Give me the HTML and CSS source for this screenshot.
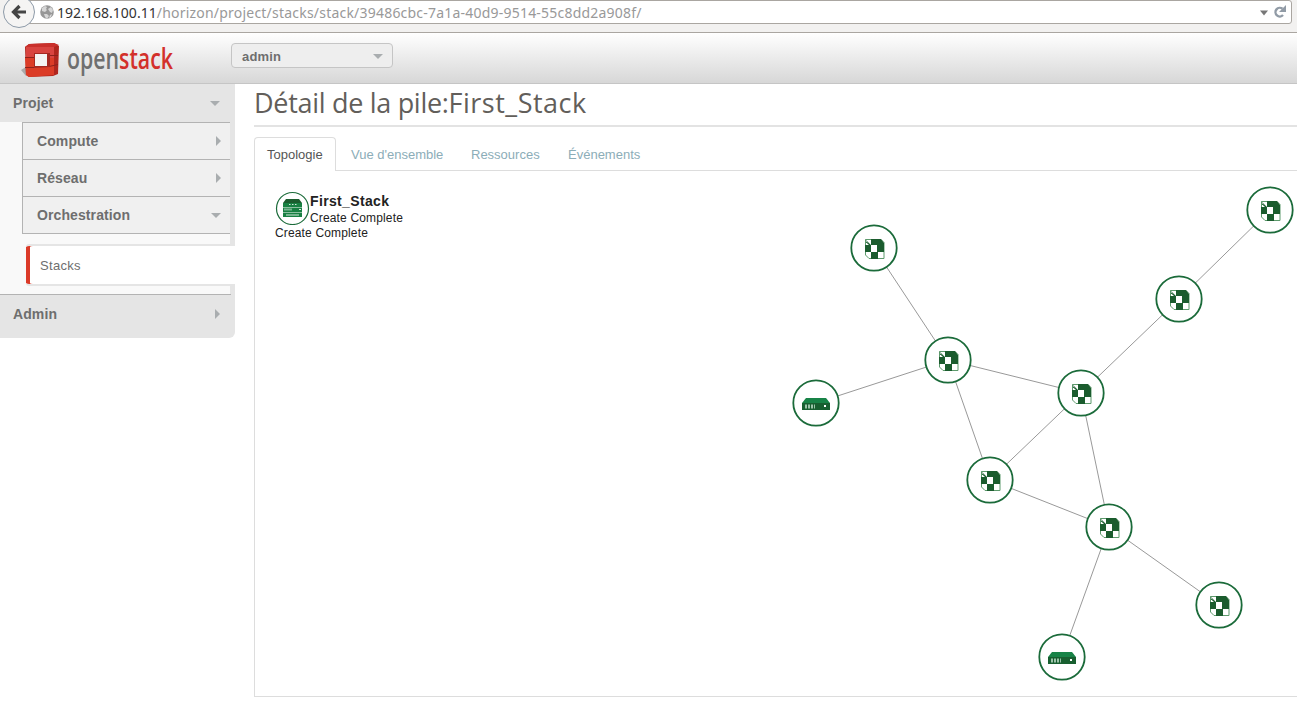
FILE: index.html
```html
<!DOCTYPE html>
<html lang="fr">
<head>
<meta charset="utf-8">
<title>Détail de la pile - OpenStack</title>
<link rel="stylesheet" href="styles.css">
</head>
<body>
<div class="browser">
  <div class="urlbar">
    <svg class="globe" width="14" height="14" viewBox="0 0 14 14"><circle cx="7" cy="7" r="6.8" fill="#969696"/><path d="M2 3l3-2 2 1-1 2 1 1-2 2-3-1zM8 4l3-2 2 3-1 3-2-1zM4 9l3 0 2 2-2 3-2-2zM10 10l2-1-1 3-2 1z" fill="#d6d6d6"/></svg>
    <span class="url"><span class="host">192.168.100.11</span><span class="path">/horizon/project/stacks/stack/39486cbc-7a1a-40d9-9514-55c8dd2a908f/</span></span>
    <svg class="tools" width="28" height="16" viewBox="0 0 28 16"><path d="M1 6.500h8l-4 5z" fill="#777"/><path d="M23.500 4.800A4.300 4.300 0 1 0 24 11" fill="none" stroke="#919ba6" stroke-width="2.400"/><path d="M27 1v7h-7l3-3z" fill="#919ba6"/></svg>
  </div>
  <svg class="back" width="36" height="29" viewBox="0 0 36 29"><circle cx="19" cy="12" r="15.500" fill="#f5f4f3" stroke="#8d9aa8"/><path d="M19.500 6L13.500 12l6 6M14 12h12" fill="none" stroke="#454545" stroke-width="3.200"/></svg>
</div>
<header class="topbar">
  <svg class="logo" width="160" height="44" viewBox="0 0 160 44">
    <path d="M1 31l5-3v9z" fill="#aaa"/>
    <path d="M5 8l4-3 25-1 5 3-1 28-5 2-24 1-3-2z" fill="#b0261e"/>
    <path d="M5 8l4-3 25-1 5 2-5 2z" fill="#c9302b"/>
    <path d="M6 8h28v11H6z" fill="#d84440"/>
    <path d="M5 19h29v17L9 38l-3-2z" fill="#db3c27"/>
    <path d="M5 18.500h9M5 28.500h9M29 16.500h9M29 27.500l9-2" stroke="#8d211b" fill="none"/>
    <path d="M14 14h16v14l-16 1z" fill="#a52822"/><path d="M15 15h12v12H15z" fill="#f4f4f4"/>
    <text x="47" y="30" textLength="106" lengthAdjust="spacingAndGlyphs"><tspan fill="#6f6f6f">open</tspan><tspan fill="#d3302b">stack</tspan></text>
  </svg>
  <div class="tenant">admin<i class="down"></i></div>
</header>
<div class="layout">
  <nav class="side">
    <div class="group">Projet<i class="down"></i></div>
    <div class="panel">
      <div class="items">
        <div class="item">Compute<i class="right"></i></div>
        <div class="item">Réseau<i class="right"></i></div>
        <div class="item">Orchestration<i class="down"></i></div>
      </div>
      <div class="leaf">Stacks</div>
    </div>
    <div class="group last">Admin<i class="right"></i></div>
  </nav>
  <main class="main">
    <h1><span class="label">Détail de la pile:</span><span class="name">First_Stack</span></h1>
    <div class="tabs"><div class="tab active">Topologie</div><div class="tab t2">Vue d'ensemble</div><div class="tab t3">Ressources</div><div class="tab t4">Événements</div></div>
    <div class="content">
      <svg class="graph" width="1042" height="525" viewBox="255 171 1042 525">
        <defs>
          <g id="ring"><circle r="22.700" fill="#fff" stroke="#1b6b3a" stroke-width="1.800"/></g>
          <g id="res"><use href="#ring"/><path d="M-8.500-8.500H7l3 3V10.500H-5l-3.500-3.500z" fill="#fff" stroke="#5d9a6c"/><path d="M-9-9L-3-3V-9H7l3 4V-2H3V4h7v-6H3v-1H-3V4h-6v-7h4zM-3 4H4v7h-7z" fill="#1b5c2e"/><path d="M-8-6l4 3" stroke="#1b5c2e"/></g>
          <g id="srv"><use href="#ring"/><path d="M-10-5H10l4 5h-28z" fill="#188347"/><path d="M-14 0h28v7h-28z" fill="#185f30"/><path d="M-11 1.500h2v4h-2zM-8 1.500h2v4h-2zM-5 1.500h2v4h-2zM-2 1.500h1v4h-1z" fill="#9cc3a9"/><path d="M8 2h2v2H8z" fill="#fff"/></g>
        </defs>
        <path class="links" d="M874 248L948 360L816 403M948 360L1081 393L1179 299L1270 210M948 360L990 480L1081 393L1109 527L990 480M1109 527L1219 605M1109 527L1062 657"/>
        <use href="#res" x="874" y="248"/><use href="#res" x="948" y="360"/><use href="#srv" x="816" y="403"/><use href="#res" x="1081" y="393"/><use href="#res" x="1179" y="299"/><use href="#res" x="1270" y="210"/><use href="#res" x="990" y="480"/><use href="#res" x="1109" y="527"/><use href="#res" x="1219" y="605"/><use href="#srv" x="1062" y="657"/>
      </svg>
      <div class="info">
        <div class="stack">
          <svg width="35" height="34" viewBox="0 0 35 34"><circle cx="17.500" cy="17.500" r="16" fill="#fff" stroke="#1b6b3a" stroke-width="1.200"/><path d="M11 8h13l3 4H8z" fill="#1b5c2e"/><path d="M8 12h19v4H8zM8 16.500h19V21H8zM8 21.500h19V26H8z" fill="#188042"/><path d="M14 13.500h1.500M17 13.500h1.500M20 13.500h1.500M24 18.500h2M11 24h13" stroke="#d5e8dc"/><path d="M9.500 18.500h8" stroke="#d5e8dc" stroke-width="2" stroke-dasharray="1 1"/></svg>
          <div class="names"><b>First_Stack</b><span>Create Complete</span></div>
        </div>
        <div class="status">Create Complete</div>
      </div>
    </div>
  </main>
</div>
</body>
</html>
```
FILE: styles.css
```css
* { box-sizing: border-box; }
body { margin: 0; height: 702px; overflow: hidden; background: #fff; font: 13px "Liberation Sans", Arial, sans-serif; color: #333; }
.browser { position: relative; height: 33px; background: #f2f1f0; border-bottom: 1px solid #aaa6a1; }
.urlbar { display: flex; align-items: center; height: 24px; margin: 0 5px 0 20px; padding: 0 4px 0 19px; background: #fff; border: 1px solid #aaa6a1; border-radius: 0 3px 3px 0; }
.back { position: absolute; left: 0; top: 0; }
.globe { margin-right: 3px; }
.url { flex: 1; font: 14px "Noto Sans", sans-serif; white-space: nowrap; color: #999; }
.host { color: #333; letter-spacing: 0.03px; }
.path { letter-spacing: 0.21px; }
.topbar { display: flex; align-items: flex-start; height: 51px; padding: 6px 0 0 20px; background: linear-gradient(#fff, #d7d7d7); border-bottom: 1px solid #c5c5c5; }
.logo { overflow: visible; }
.logo text { font: 600 29px "Open Sans", sans-serif; }
.tenant { display: flex; align-items: center; justify-content: space-between; width: 162px; height: 25px; margin: 4px 0 0 51px; padding: 1px 9px 0 10px; border: 1px solid #c5c5c5; border-radius: 4px; background: #eee; font-weight: bold; color: #6e6e6e; letter-spacing: 0.15px; }
.down { border: 5px solid transparent; border-top-color: #a9adaf; border-bottom: 0; }
.right { border: 5px solid transparent; border-left-color: #a9adaf; border-right: 0; }
.layout { display: flex; align-items: flex-start; }
.side { width: 235px; background: #e5e5e5; border-radius: 0 0 6px 0; font-size: 14px; font-weight: bold; letter-spacing: 0.1px; color: #6e6e6e; }
.group { display: flex; align-items: center; justify-content: space-between; height: 38px; padding: 0 15px 0 13px; }
.last { height: 43px; padding-bottom: 5px; }
.panel { height: 173px; background: linear-gradient(90deg, #f9f9f9 230px, #e5e5e5 230px); border-bottom: 1px solid; border-image: linear-gradient(90deg, #b3b3b3 230px, #e5e5e5 230px) 1; }
.items { width: 208px; margin-left: 22px; border-left: 1px solid #b3b3b3; border-bottom: 1px solid #b3b3b3; background: #f0f0f0; }
.item { display: flex; align-items: center; justify-content: space-between; height: 37px; padding: 0 9px 0 14px; border-top: 1px solid #b3b3b3; }
.leaf { height: 42px; margin: 10px 0 0 26px; padding-left: 14px; border: solid #e5e5e5; border-width: 2px 0; background: #fff; box-shadow: inset 4px 0 #db3a28; border-radius: 3px 0 0 3px; font-size: 13px; font-weight: normal; letter-spacing: 0.3px; line-height: 39px; }
.main { flex: 1; min-width: 0; padding-left: 19px; }
h1 { height: 43px; margin: 0 0 10px; border-bottom: 2px solid #e3e3e3; font: 27px/37px "Open Sans", sans-serif; color: #625e5a; white-space: nowrap; }
.label { letter-spacing: -0.3px; }
.name { letter-spacing: 0.5px; }
.tabs { display: flex; height: 34px; border-bottom: 1px solid #ddd; color: #8cadb8; }
.tab { height: 33px; line-height: 35px; white-space: nowrap; }
.active { width: 82px; height: 34px; padding-left: 12px; border: 1px solid #ddd; border-bottom: 0; border-radius: 4px 4px 0 0; background: #fff; color: #555; line-height: 33px; }
.t2 { margin-left: 15px; width: 120px; }
.t3 { width: 97px; }
.content { position: relative; height: 526px; border: solid #ddd; border-width: 0 0 1px 1px; }
.graph { display: block; }
.links { fill: none; stroke: #999; stroke-width: 1; }
.info { position: absolute; left: 20px; top: 20px; font-size: 12px; letter-spacing: 0.15px; color: #222; }
.stack { display: flex; height: 34px; }
.names { display: flex; flex-direction: column; padding-top: 2px; line-height: 16px; }
.names b { font-size: 14px; line-height: 17px; letter-spacing: 0.35px; }
.status { line-height: 17px; }
```
